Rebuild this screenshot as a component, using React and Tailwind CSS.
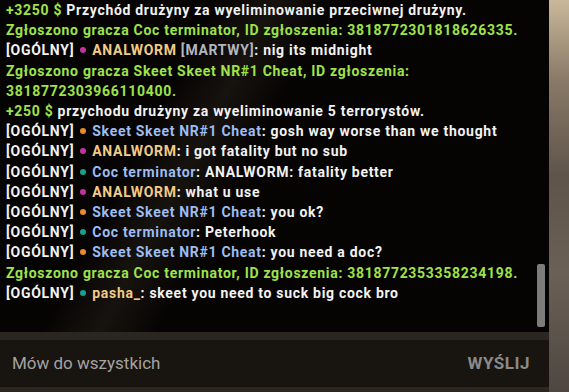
const C = {
  green: 'text-[#9fe24a]',
  white: 'text-[#f2f2f2]',
  blue: 'text-[#9dbcf2]',
  gold: 'text-[#f1cb87]',
  grey: 'text-[#b3b6bd]'
};

const dot = {
  magenta: 'bg-[#c0359b]',
  orange: 'bg-[#e98a2c]',
  teal: 'bg-[#17a08a]'
};

const lines = [
  { kind: 'money', amount: '+3250 $', text: ' Przychód drużyny za wyeliminowanie przeciwnej drużyny.' },
  { kind: 'report', text: 'Zgłoszono gracza Coc terminator, ID zgłoszenia: 3818772301818626335.' },
  { kind: 'chat', dot: 'magenta', name: 'ANALWORM', nameTone: 'gold', dead: true, text: 'nig its midnight' },
  { kind: 'report', text: 'Zgłoszono gracza Skeet Skeet NR#1 Cheat, ID zgłoszenia: 3818772303966110400.' },
  { kind: 'money', amount: '+250 $', text: ' przychodu drużyny za wyeliminowanie 5 terrorystów.' },
  { kind: 'chat', dot: 'orange', name: 'Skeet Skeet NR#1 Cheat', nameTone: 'blue', text: 'gosh way worse than we thought' },
  { kind: 'chat', dot: 'magenta', name: 'ANALWORM', nameTone: 'gold', text: 'i got fatality but no sub' },
  { kind: 'chat', dot: 'teal', name: 'Coc terminator', nameTone: 'blue', text: 'ANALWORM: fatality better' },
  { kind: 'chat', dot: 'magenta', name: 'ANALWORM', nameTone: 'gold', text: 'what u use' },
  { kind: 'chat', dot: 'orange', name: 'Skeet Skeet NR#1 Cheat', nameTone: 'blue', text: 'you ok?' },
  { kind: 'chat', dot: 'teal', name: 'Coc terminator', nameTone: 'blue', text: 'Peterhook' },
  { kind: 'chat', dot: 'orange', name: 'Skeet Skeet NR#1 Cheat', nameTone: 'blue', text: 'you need a doc?' },
  { kind: 'report', text: 'Zgłoszono gracza Coc terminator, ID zgłoszenia: 3818772353358234198.' },
  { kind: 'chat', dot: 'teal', name: 'pasha_', nameTone: 'gold', text: 'skeet you need to suck big cock bro' }
];

function Line({ line }) {
  if (line.kind === 'money') {
    return (
      <p className={C.white}>
        <span className={C.green}>{line.amount}</span>
        {line.text}
      </p>
    );
  }
  if (line.kind === 'report') {
    return <p className={C.green}>{line.text}</p>;
  }
  return (
    <p className={C.white}>
      [OGÓLNY]
      <span className={`mx-[6px] inline-block h-[6px] w-[6px] rounded-full align-[2px] ${dot[line.dot]}`} />
      <span className={C[line.nameTone]}>{line.name}</span>
      {line.dead && <span className={C.grey}> [MARTWY]</span>}
      : {line.text}
    </p>
  );
}

export default function App() {
  return (
    <div
      className="flex h-[392px] w-[569px] overflow-hidden bg-[#4a4038]"
      style={{ fontFamily: 'Roboto, "Liberation Sans", sans-serif' }}
    >
      <div className="flex w-[549px] flex-col bg-[#221d18]">
        <div className="relative flex h-[332px] overflow-hidden bg-[#060403]">
          <div className="pointer-events-none absolute inset-0 bg-[linear-gradient(118deg,transparent_0%,transparent_30%,rgba(110,95,75,0.16)_38%,transparent_46%,transparent_100%)]" />
          <div className="relative w-[536px] pl-[6px] text-[14px] font-bold leading-[20.2px] tracking-[0.7px]">
            {lines.map((l, i) => (
              <Line key={i} line={l} />
            ))}
          </div>
          <div className="relative flex flex-1 items-end pb-[5px]">
            <div className="ml-[1px] h-[63px] w-[8px] rounded-[2px] bg-[#7c7c7c]" />
          </div>
        </div>
        <div className="h-[8px] bg-[#2c2620]" />
        <div className="flex h-[47px] items-center justify-between bg-[#18140f] pl-[12px] pr-[19px]">
          <span className="text-[17px] text-[#a3a3a3]">Mów do wszystkich</span>
          <span className="text-[17px] font-bold tracking-[0.5px] text-[#8a8a8a]">WYŚLIJ</span>
        </div>
        <div className="flex-1 bg-[#2c2620]" />
      </div>
      <div className="flex-1 bg-[linear-gradient(180deg,#c9b89a_0%,#8a7a68_20%,#5e544a_45%,#6b6056_70%,#4e4640_100%)]" />
    </div>
  );
}
